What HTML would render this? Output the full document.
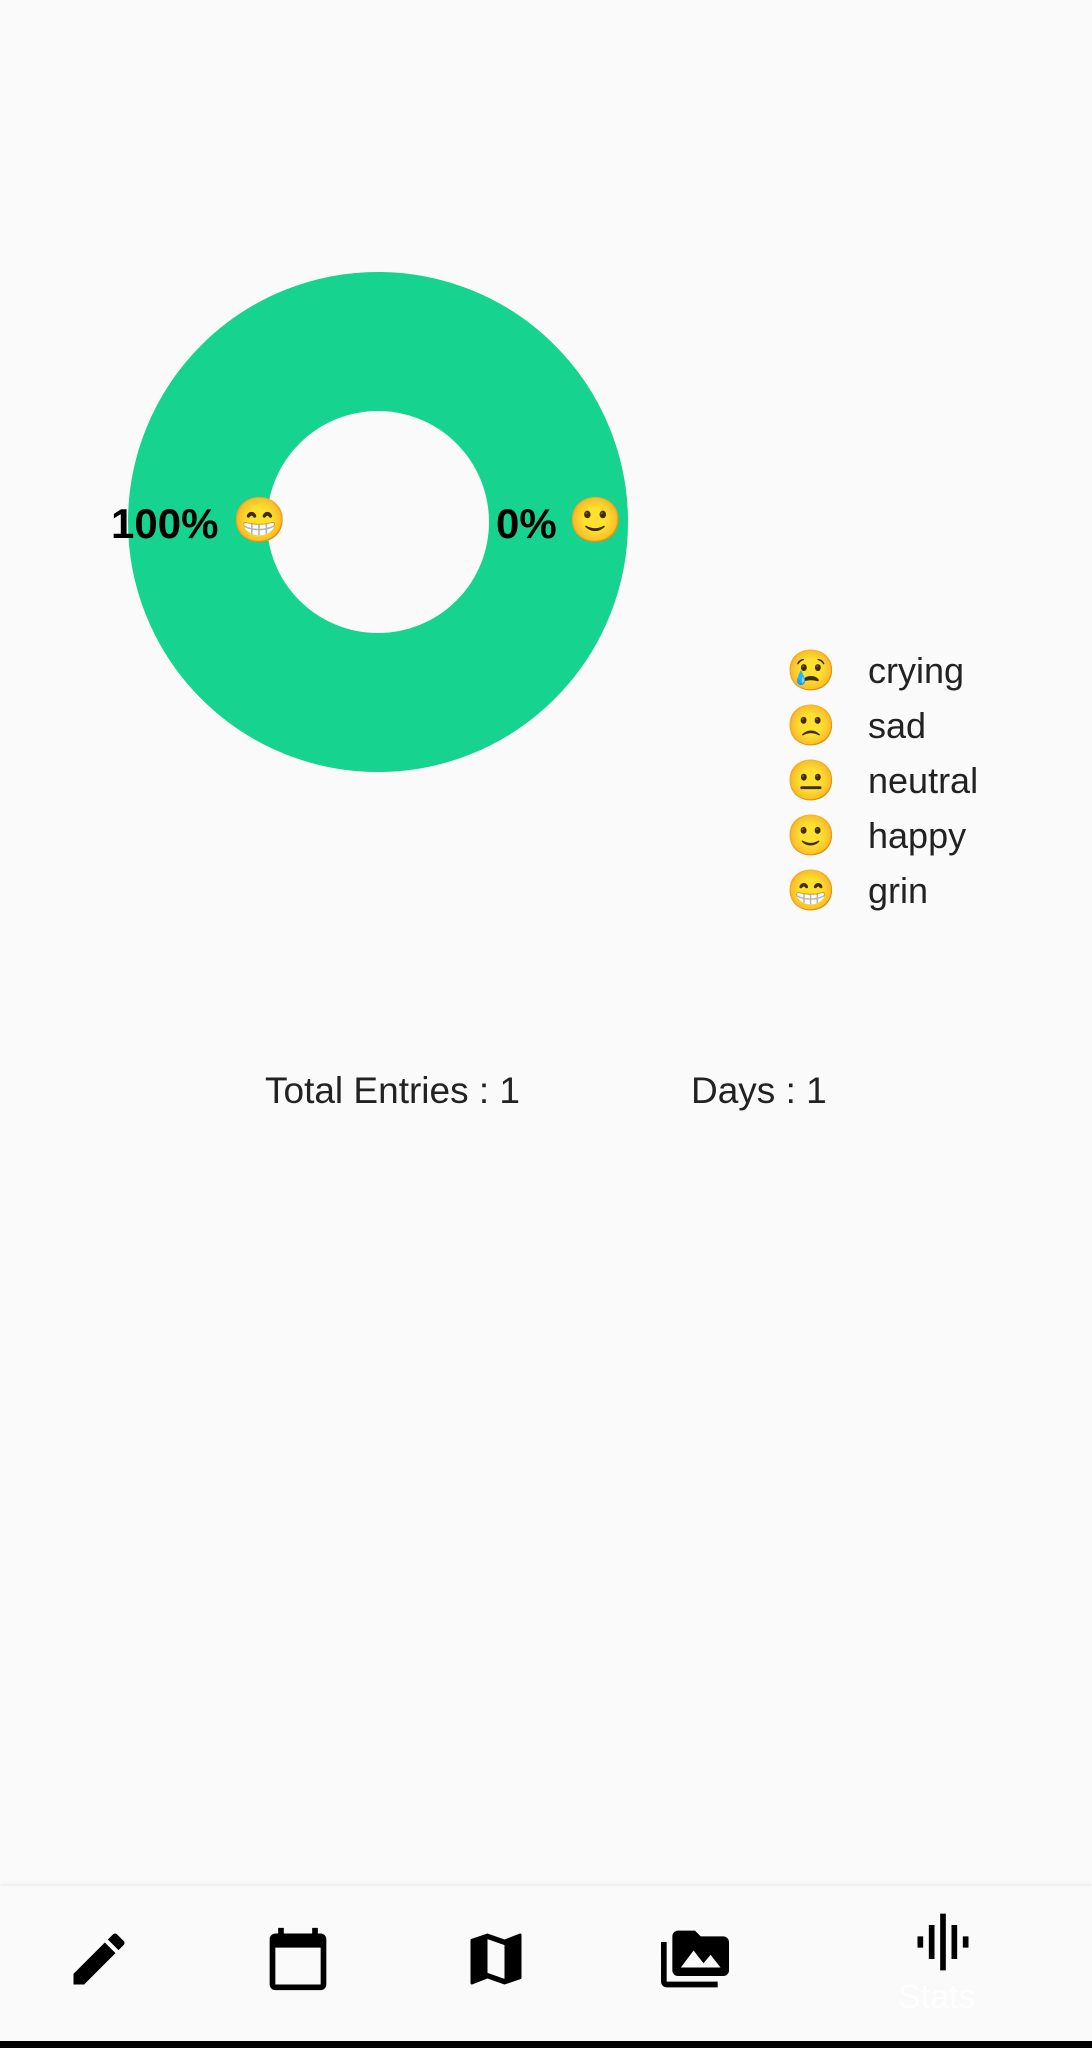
<!DOCTYPE html>
<html><head><meta charset="utf-8"><style>
html,body{margin:0;padding:0}
body{width:1092px;height:2048px;background:#fafafa;position:relative;overflow:hidden;font-family:"Liberation Sans","Noto Sans CJK JP",sans-serif}
.a{position:absolute;white-space:nowrap}
.lbl{font-weight:bold;font-size:42px;color:#000;line-height:1}
.leg{font-size:36px;color:#222;line-height:1}
.em{font-size:40px;line-height:1}
.nav{position:absolute;left:0;top:1886px;width:1092px;height:155px;background:#fafafa;box-shadow:0 -2px 4px rgba(0,0,0,0.06)}
.bar{position:absolute;left:0;top:2041px;width:1092px;height:7px;background:#000}
</style></head><body>
<svg class="a" style="left:0;top:0" width="1092" height="900">
<circle cx="378" cy="522" r="180.5" fill="none" stroke="#16d38f" stroke-width="139"/>
</svg>
<div class="a lbl" style="left:111px;top:503px">100%</div>
<div class="a em" style="left:232px;top:499px;font-size:44px">😁</div>
<div class="a lbl" style="left:496px;top:503px">0%</div>
<div class="a em" style="left:568px;top:499px;font-size:44px">🙂</div>

<div class="a em" style="left:786px;top:651px">😢</div><div class="a leg" style="left:868px;top:653px">crying</div>
<div class="a em" style="left:786px;top:706px">🙁</div><div class="a leg" style="left:868px;top:708px">sad</div>
<div class="a em" style="left:786px;top:761px">😐</div><div class="a leg" style="left:868px;top:763px">neutral</div>
<div class="a em" style="left:786px;top:816px">🙂</div><div class="a leg" style="left:868px;top:818px">happy</div>
<div class="a em" style="left:786px;top:871px">😁</div><div class="a leg" style="left:868px;top:873px">grin</div>

<div class="a leg" style="left:265px;top:1072px;font-size:37px">Total Entries : 1</div>
<div class="a leg" style="left:691px;top:1072px;font-size:37px">Days : 1</div>

<div class="nav"></div>
<svg class="a" style="left:65px;top:1925px" width="68" height="68" viewBox="0 0 24 24"><path d="M3 17.25V21h3.75L17.81 9.94l-3.75-3.75L3 17.25zM20.71 7.04a1 1 0 000-1.41l-2.34-2.34a1 1 0 00-1.41 0l-1.83 1.83 3.75 3.75 1.83-1.83z"/></svg>
<svg class="a" style="left:264px;top:1925px" width="68" height="68" viewBox="0 0 24 24"><path d="M20 3h-1V1h-2v2H7V1H5v2H4c-1.1 0-2 .9-2 2v16c0 1.1.9 2 2 2h16c1.1 0 2-.9 2-2V5c0-1.1-.9-2-2-2zm0 18H4V8h16v13z"/></svg>
<svg class="a" style="left:462px;top:1925px" width="68" height="68" viewBox="0 0 24 24"><path d="M20.5 3l-.16.03L15 5.1 9 3 3.36 4.9c-.21.07-.36.25-.36.48V20.5c0 .28.22.5.5.5l.16-.03L9 18.9l6 2.1 5.64-1.9c.21-.07.36-.25.36-.48V3.5c0-.28-.22-.5-.5-.5zM15 19l-6-2.11V5l6 2.11V19z"/></svg>
<svg class="a" style="left:661px;top:1925px" width="68" height="68" viewBox="0 0 24 24"><path d="M2 6H0v5h.01L0 20c0 1.1.9 2 2 2h18v-2H2V6zm20-2h-8l-2-2H6c-1.1 0-1.99.9-1.99 2L4 16c0 1.1.9 2 2 2h16c1.1 0 2-.9 2-2V6c0-1.1-.9-2-2-2zM7 15l4.5-6 3.5 4.51 2.5-3.01L21 15H7z"/></svg>
<svg class="a" style="left:909px;top:1908px" width="68" height="68" viewBox="0 0 24 24"><path d="M7 18h2V6H7v12zm4 4h2V2h-2v20zm-8-8h2v-4H3v4zm12 4h2V6h-2v12zm4-8v4h2v-4h-2z"/></svg>
<div class="a" style="left:898px;top:1978px;font-size:34px;color:#fff">Stats</div>
<div class="bar"></div>
</body></html>
